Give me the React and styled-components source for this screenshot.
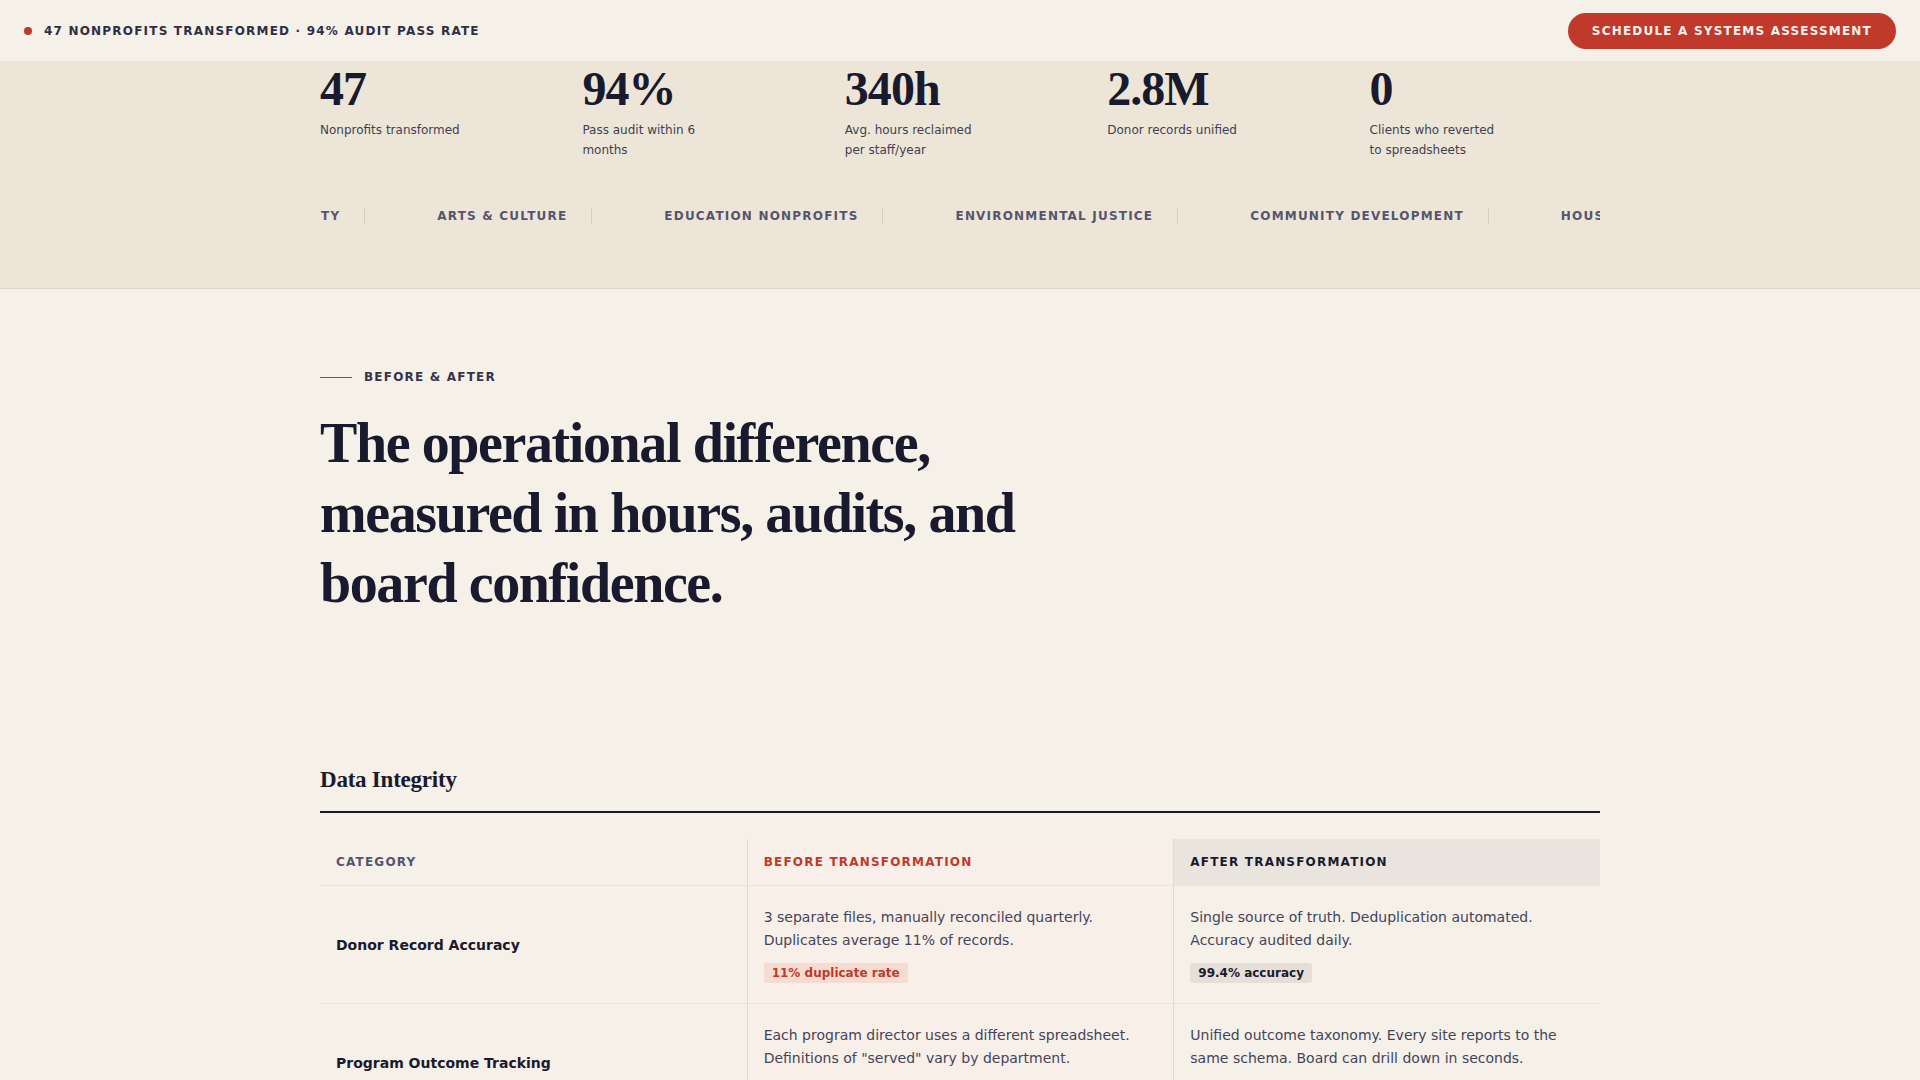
import React from 'react';
import styled, { createGlobalStyle } from 'styled-components';

const SANS = '"DejaVu Sans", "Noto Sans", sans-serif';
const SERIF = '"Liberation Serif", "Times New Roman", serif';
const INK = '#1a1a2e';
const RED = '#c0392b';

const GlobalStyle = createGlobalStyle`
  *, *::before, *::after { box-sizing: border-box; }
  html, body { margin: 0; padding: 0; background: #f5f0e8; }
  body { font-family: ${SANS}; color: ${INK}; }
`;

const Page = styled.div`
  min-height: 100vh;
  background: #f5f0e8;
  overflow: hidden;
`;

const TopBar = styled.header`
  height: 61px;
  display: flex;
  align-items: center;
  justify-content: space-between;
  padding: 0 24px;
  background: #f5f0e8;
`;

const Tagline = styled.div`
  display: flex;
  align-items: center;
  gap: 12px;
  font-size: 12px;
  font-weight: 700;
  letter-spacing: 0.1em;
  text-transform: uppercase;
  color: #2e2e45;
  line-height: 16px;
`;

const Dot = styled.span`
  width: 8px;
  height: 8px;
  border-radius: 50%;
  background: ${RED};
  flex-shrink: 0;
`;

const CtaButton = styled.button`
  border: 0;
  background: ${RED};
  color: #fbf3ee;
  font-family: ${SANS};
  font-size: 12px;
  font-weight: 700;
  letter-spacing: 0.1em;
  line-height: 14px;
  text-transform: uppercase;
  padding: 11px 24px;
  border-radius: 999px;
  cursor: pointer;
  margin-top: 1px;
`;

const Band = styled.section`
  background: #ede6d8;
  border-bottom: 1px solid #dcd5c8;
  padding: 5px 0 64px;
`;

const Container = styled.div`
  width: 1280px;
  margin: 0 auto;
`;

const StatsGrid = styled.div`
  display: grid;
  grid-template-columns: repeat(5, 1fr);
  gap: 32px;
`;

const Stat = styled.div`
  display: flex;
  flex-direction: column;
`;

const StatNumber = styled.div`
  font-family: ${SERIF};
  font-size: 48px;
  font-weight: 700;
  line-height: 46px;
  letter-spacing: -0.02em;
  color: ${INK};
`;

const StatLabel = styled.div`
  margin-top: 8px;
  max-width: 140px;
  font-size: 12px;
  line-height: 20px;
  color: #3f3f52;
`;

const Marquee = styled.div`
  margin-top: 48px;
  overflow: hidden;
`;

const Track = styled.div`
  display: flex;
  gap: 48px;
  white-space: nowrap;
  transform: translateX(-128px);
`;

const Sector = styled.span`
  flex-shrink: 0;
  padding: 0 24px;
  border-right: 1px solid #d8cfc0;
  font-size: 12px;
  font-weight: 700;
  letter-spacing: 0.1em;
  line-height: 16px;
  text-transform: uppercase;
  color: #55556e;
`;

const Section = styled.section`
  padding: 80px 0 120px;
`;

const Eyebrow = styled.div`
  display: flex;
  align-items: center;
  gap: 12px;
  margin-bottom: 23px;
  font-size: 12px;
  font-weight: 700;
  letter-spacing: 0.1em;
  line-height: 16px;
  text-transform: uppercase;
  color: #34344a;
`;

const EyebrowRule = styled.span`
  width: 32px;
  height: 1px;
  background: ${RED};
`;

const Heading = styled.h2`
  margin: 0;
  max-width: 780px;
  font-family: ${SERIF};
  font-size: 56px;
  font-weight: 700;
  line-height: 70px;
  letter-spacing: -0.025em;
  color: ${INK};
`;

const Group = styled.div`
  margin-top: 148px;
`;

const GroupTitle = styled.h3`
  margin: 0 0 26px;
  padding-bottom: 17px;
  border-bottom: 2px solid ${INK};
  font-family: ${SERIF};
  font-size: 23px;
  font-weight: 700;
  line-height: 28px;
  letter-spacing: -0.01em;
  color: ${INK};
`;

const Table = styled.div`
  display: grid;
  grid-template-columns: repeat(3, 1fr);
`;

const headTone = {
  category: { bg: 'transparent', color: '#55556e' },
  before: { bg: '#f7efe8', color: RED },
  after: { bg: '#e9e4dd', color: INK },
};

const HeadCell = styled.div`
  padding: 16px;
  font-size: 12px;
  font-weight: 700;
  letter-spacing: 0.1em;
  line-height: 14px;
  text-transform: uppercase;
  background: ${(p) => headTone[p.$tone].bg};
  color: ${(p) => headTone[p.$tone].color};
  border-bottom: 1px solid #ebe4da;
  border-left: ${(p) => (p.$tone === 'category' ? '0' : '1px solid #e2dace')};
`;

const CategoryCell = styled.div`
  display: flex;
  align-items: center;
  padding: 20px 16px;
  border-bottom: 1px solid #ebe4da;
  font-size: 14px;
  font-weight: 700;
  line-height: 22px;
  color: ${INK};
`;

const ValueCell = styled.div`
  display: flex;
  flex-direction: column;
  align-items: flex-start;
  gap: 11px;
  padding: 20px 16px;
  border-bottom: 1px solid #ebe4da;
  border-left: 1px solid #e2dace;
  background: ${(p) => (p.$tone === 'before' ? '#f7efe8' : 'transparent')};
`;

const CellText = styled.p`
  margin: 0;
  font-size: 14px;
  line-height: 23px;
  color: #44445a;
`;

const Badge = styled.span`
  display: inline-block;
  padding: 3px 8px;
  border-radius: 3px;
  font-size: 12px;
  font-weight: 700;
  line-height: 14px;
  background: ${(p) => (p.$tone === 'before' ? '#f4dcd2' : '#e5dfd7')};
  color: ${(p) => (p.$tone === 'before' ? RED : INK)};
`;

const stats = [
  { value: '47', label: 'Nonprofits transformed' },
  { value: '94%', label: 'Pass audit within 6 months' },
  { value: '340h', label: 'Avg. hours reclaimed per staff/year' },
  { value: '2.8M', label: 'Donor records unified' },
  { value: '0', label: 'Clients who reverted to spreadsheets' },
];

const sectors = [
  'Food Security',
  'Arts & Culture',
  'Education Nonprofits',
  'Environmental Justice',
  'Community Development',
  'Housing & Homelessness',
  'Health & Human Services',
];

const rows = [
  {
    category: 'Donor Record Accuracy',
    before: '3 separate files, manually reconciled quarterly. Duplicates average 11% of records.',
    beforeBadge: '11% duplicate rate',
    after: 'Single source of truth. Deduplication automated. Accuracy audited daily.',
    afterBadge: '99.4% accuracy',
  },
  {
    category: 'Program Outcome Tracking',
    before: 'Each program director uses a different spreadsheet. Definitions of "served" vary by department.',
    beforeBadge: 'No shared definitions',
    after: 'Unified outcome taxonomy. Every site reports to the same schema. Board can drill down in seconds.',
    afterBadge: '1 shared schema',
  },
  {
    category: 'Grant Reporting',
    before: 'Reports assembled by hand from email threads and exports, two weeks before each deadline.',
    beforeBadge: '2 weeks per report',
    after: 'Funder reports generated from live data with a full audit trail attached.',
    afterBadge: '2 hours per report',
  },
];

export default function App() {
  return (
    <Page>
      <GlobalStyle />
      <TopBar>
        <Tagline>
          <Dot />
          47 Nonprofits Transformed · 94% Audit Pass Rate
        </Tagline>
        <CtaButton>Schedule a Systems Assessment</CtaButton>
      </TopBar>

      <Band>
        <Container>
          <StatsGrid>
            {stats.map((s) => (
              <Stat key={s.value}>
                <StatNumber>{s.value}</StatNumber>
                <StatLabel>{s.label}</StatLabel>
              </Stat>
            ))}
          </StatsGrid>
          <Marquee>
            <Track>
              {sectors.map((s) => (
                <Sector key={s}>{s}</Sector>
              ))}
            </Track>
          </Marquee>
        </Container>
      </Band>

      <Section>
        <Container>
          <Eyebrow>
            <EyebrowRule />
            Before &amp; After
          </Eyebrow>
          <Heading>
            The operational difference, measured in hours, audits, and board confidence.
          </Heading>

          <Group>
            <GroupTitle>Data Integrity</GroupTitle>
            <Table>
              <HeadCell $tone="category">Category</HeadCell>
              <HeadCell $tone="before">Before Transformation</HeadCell>
              <HeadCell $tone="after">After Transformation</HeadCell>
              {rows.map((r) => (
                <React.Fragment key={r.category}>
                  <CategoryCell>{r.category}</CategoryCell>
                  <ValueCell $tone="before">
                    <CellText>{r.before}</CellText>
                    <Badge $tone="before">{r.beforeBadge}</Badge>
                  </ValueCell>
                  <ValueCell $tone="after">
                    <CellText>{r.after}</CellText>
                    <Badge $tone="after">{r.afterBadge}</Badge>
                  </ValueCell>
                </React.Fragment>
              ))}
            </Table>
          </Group>
        </Container>
      </Section>
    </Page>
  );
}
